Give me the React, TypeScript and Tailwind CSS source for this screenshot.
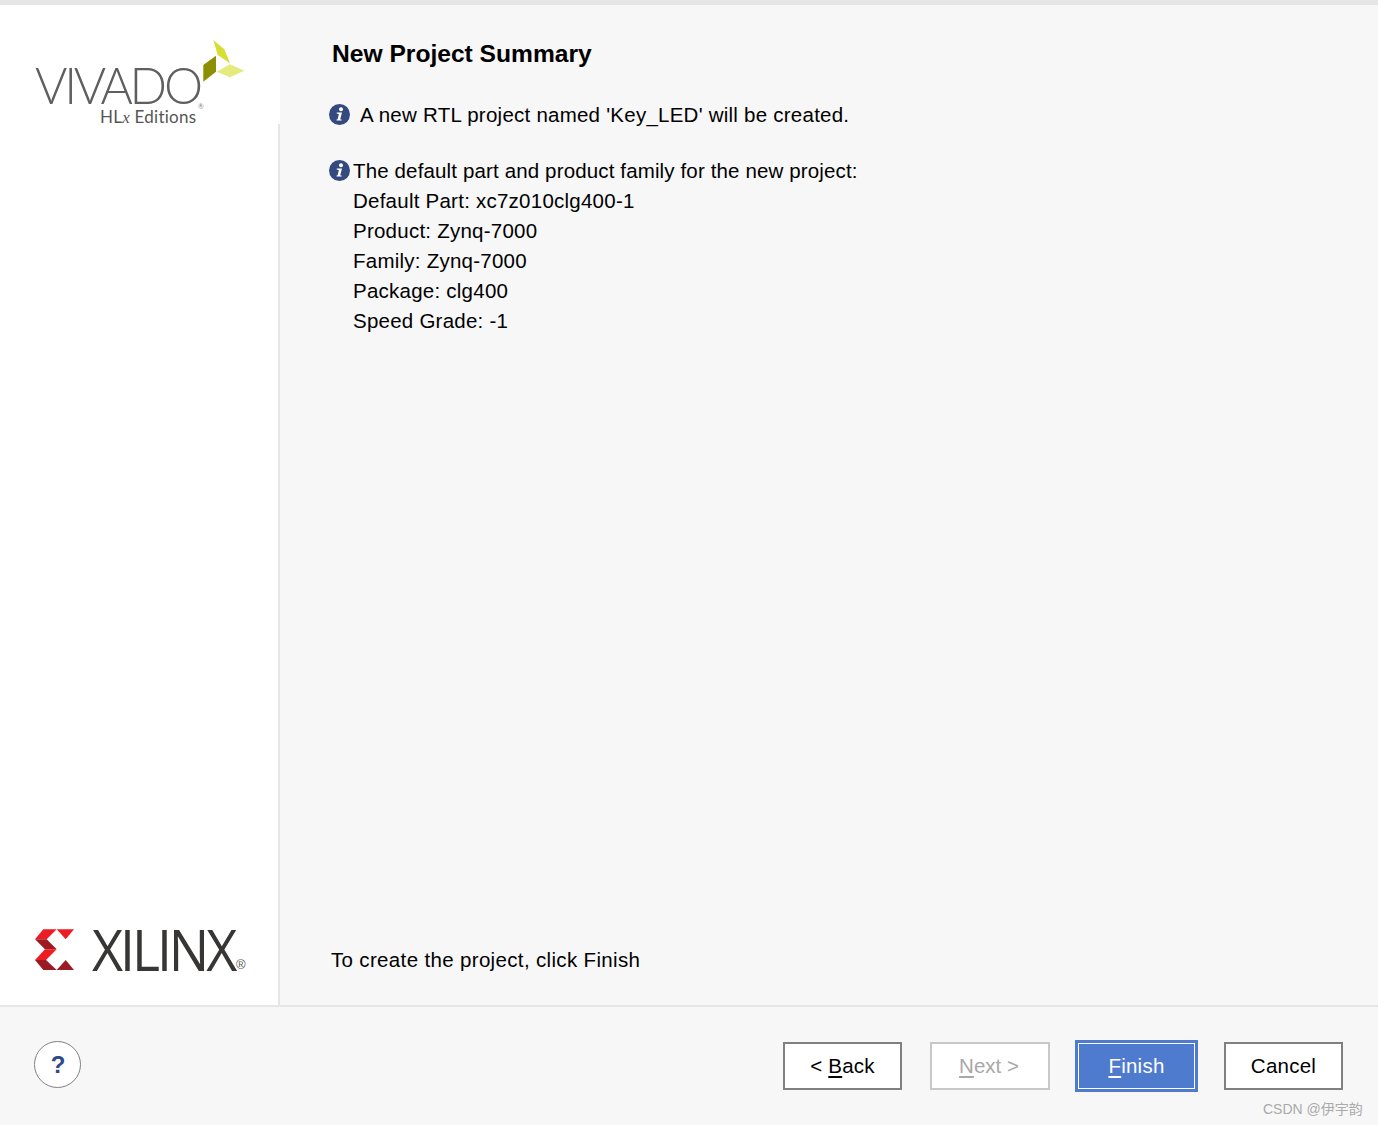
const sans = "font-['Liberation_Sans',Arial,sans-serif]";

function InfoIcon() {
  return (
    <svg width="21" height="21" viewBox="0 0 21 21" className="shrink-0 mb-[1px]">
      <circle cx="10.5" cy="10.5" r="10.5" fill="#34497e" />
      <circle cx="12" cy="5.2" r="2" fill="#fff" />
      <path d="M7.8 8.6h5.2l-1.7 6.4c-.1.5.3.6 1.4.4v1.2H7.5v-1c.8 0 1-.2 1.2-.8l1.1-4.3c.1-.6-.2-.8-2-.8z" fill="#fff" />
    </svg>
  );
}

function VivadoLogo() {
  return (
    <div className="h-[119px] w-full pl-[35px] pt-[35px] font-['Lato',sans-serif]">
      <div className="flex items-start h-[70px]">
        <div className="relative w-[168px] h-[70px] pt-[25px]">
          <span className="block w-[165px] origin-left scale-x-[0.95] text-[52px] leading-[38px] font-light tracking-[-3.4px] text-[#5f5f5f] whitespace-nowrap">VIVADO</span>
          <span className="absolute left-[163px] top-[63px] text-[7px] leading-[7px] text-[#888]">®</span>
        </div>
        <svg width="42" height="43" viewBox="203 40 42 43">
          <polygon points="213.3,40 224.3,49.3 230,63.3 217.7,55" fill="#d6de32" />
          <polygon points="216,55.7 203.3,65 203.3,81.7 216,71.7" fill="#8b8f00" />
          <polygon points="230,64.3 244.3,70.7 230,77.3 216.7,71.7" fill="#e4ea7c" />
        </svg>
      </div>
      <div className="-mt-[1px] pl-[65px] text-[17px] tracking-[0.25px] leading-[16px] text-[#555] whitespace-nowrap">
        HL<span className="italic font-['Liberation_Serif',serif]">x</span> Editions
      </div>
    </div>
  );
}

function XilinxLogo() {
  return (
    <div className="flex items-start pl-[35px] mb-[35px]">
      <svg width="40" height="41" viewBox="35 929 40 41" className="shrink-0">
        <polygon points="43.3,929.3 56.7,929.3 46.7,939.3 35,939.3" fill="#ed1c24" />
        <polygon points="35,939.3 46.7,939.3 56.7,949.3 45,949.3" fill="#9b1b22" />
        <polygon points="45,949.3 56.7,949.3 46,960 35,960" fill="#ed1c24" />
        <polygon points="35,960 46,960 56.7,970 43.3,970" fill="#9b1b22" />
        <polygon points="56.7,929.3 74,929.3 65.7,939.3" fill="#ed1c24" />
        <polygon points="65.7,960 74,970 56.7,970" fill="#9b1b22" />
      </svg>
      <div className="relative ml-[17px] h-[41px] w-[154px]">
        <span className="block w-[144px] origin-left scale-x-[0.96] text-[56px] leading-[41px] font-['Open_Sans',sans-serif] font-medium tracking-[-3.2px] text-[#373635] whitespace-nowrap">XILINX</span>
        <span className="absolute left-[144px] top-[29px] text-[13px] leading-[13px] text-[#555] font-['Liberation_Sans',sans-serif]">®</span>
      </div>
    </div>
  );
}

function Btn({ children, cls }: { children: React.ReactNode; cls: string }) {
  return <div className={`flex items-center justify-center pt-[1px] text-[20.5px] ${cls}`}>{children}</div>;
}

export default function App() {
  return (
    <div className={`relative w-[1378px] h-[1125px] flex flex-col bg-[#f7f7f7] overflow-hidden ${sans} text-black`}>
      <div className="h-[5px] bg-[#e6e6e6]" />
      <div className="flex h-[1000px] border-b-2 border-[#e6e6e6] box-content">
        <div className="w-[280px] shrink-0 flex flex-col justify-between">
          <div className="bg-white w-[280px]"><VivadoLogo /></div>
          <div className="flex-1 bg-white w-[280px] border-r-2 border-[#e6e6e6] flex flex-col justify-end"><XilinxLogo /></div>
        </div>
        <div className="flex-1 pl-[49px] flex flex-col">
          <h1 className="pl-[3px] mt-[32px] text-[24.6px] leading-[34px] font-bold">New Project Summary</h1>
          <div className="mt-[29px] flex items-center h-[30px] text-[20.5px] tracking-[0.24px] leading-[30px]">
            <InfoIcon />
            <span className="ml-[10px]">A new RTL project named 'Key_LED' will be created.</span>
          </div>
          <div className="mt-[26px] flex items-center h-[30px] text-[20.5px] tracking-[0.14px] leading-[30px]">
            <InfoIcon />
            <span className="ml-[3px]">The default part and product family for the new project:</span>
          </div>
          <div className="pl-[24px] text-[20.5px] tracking-[0.24px] leading-[30px]">
            <div>Default Part: xc7z010clg400-1</div>
            <div>Product: Zynq-7000</div>
            <div>Family: Zynq-7000</div>
            <div>Package: clg400</div>
            <div>Speed Grade: -1</div>
          </div>
          <div className="mt-auto mb-[30px] pl-[2px] text-[20.5px] tracking-[0.34px] leading-[30px]">To create the project, click Finish</div>
        </div>
      </div>
      <div className="flex-1 flex items-center pl-[34px] pr-[35px] pb-[1px]">
        <div className="w-[47px] h-[47px] -mt-[2px] rounded-full bg-white border border-[#808080] flex items-center justify-center pl-[1px] text-[24px] font-bold text-[#2f4b87]">?</div>
        <div className="ml-auto flex items-center">
          <Btn cls="w-[119px] h-[48px] tracking-[0.24px] bg-white border-2 border-[#808080]">&lt;&nbsp;<span className="underline underline-offset-[3px]">B</span>ack</Btn>
          <Btn cls="ml-[28px] w-[120px] h-[48px] pr-[2px] bg-white border-2 border-[#c8c8c8] text-[#a8a8a8]"><span className="underline underline-offset-[3px]">N</span>ext &gt;</Btn>
          <div className="ml-[25px] w-[123px] h-[52px] bg-[#4f7bce] p-[3px]">
            <Btn cls="w-full h-full tracking-[0.24px] border border-white text-white"><span className="underline underline-offset-[3px]">F</span>inish</Btn>
          </div>
          <Btn cls="ml-[26px] w-[119px] h-[48px] tracking-[0.24px] bg-white border-2 border-[#808080]">Cancel</Btn>
        </div>
      </div>
      <div className="absolute left-[1263px] top-[1100px] text-[14px] leading-[18px] text-[#aaaaaa] whitespace-nowrap font-['Liberation_Sans','Noto_Sans_CJK_SC',sans-serif]">CSDN @伊宇韵</div>
    </div>
  );
}
